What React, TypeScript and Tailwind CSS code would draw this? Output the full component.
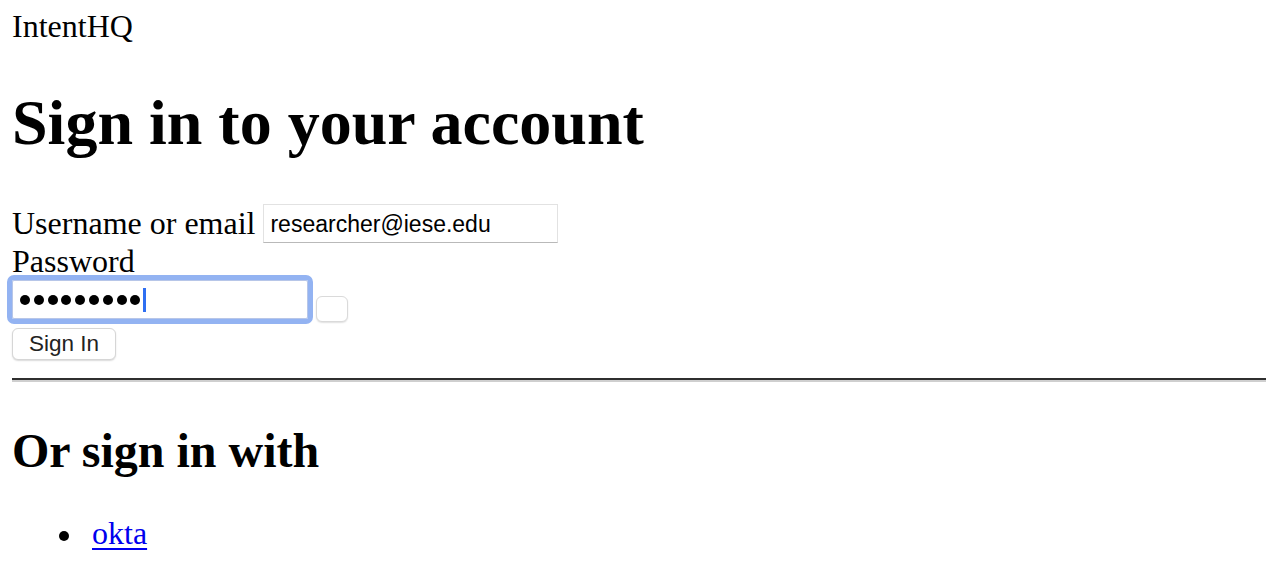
export default function App() {
  const dots = Array.from({ length: 9 });

  return (
    <div className="min-h-[566px] bg-white pt-[8px] pl-[12px] pr-[14px] text-black" style={{ fontFamily: '"Liberation Serif", "Times New Roman", serif' }}>
      <div className="text-[32px] leading-[37px]">IntentHQ</div>

      <h1 className="mt-[41px] text-[64px] font-bold leading-[74px]">Sign in to your account</h1>

      <form className="mt-[44px] flex flex-col items-start">
        {/* username */}
        <div className="flex h-[39px] items-center gap-[8px]">
          <label className="text-[32px] leading-[37px]">Username or email</label>
          <div className="flex h-[39px] w-[295px] items-center border border-[#e2e2e2] border-b-[#b9b9b9] bg-white pl-[6px] pt-[2px] text-[23px] text-black" style={{ fontFamily: '"Liberation Sans", Arial, sans-serif' }}>
            researcher@iese.edu
          </div>
        </div>

        <label className="text-[32px] leading-[37px]">Password</label>

        {/* password + toggle */}
        <div className="flex h-[42px] items-start gap-[8px]">
          <div className="flex h-[39px] w-[296px] items-center rounded-[2px] border border-[#b7c6e8] bg-white pl-[7px] outline-[5px] outline-solid outline-[#93b3f2]">
            <div className="flex items-center gap-[3.8px] pt-[1px]">
              {dots.map((_, i) => (
                <span key={i} className="block h-[10px] w-[10px] rounded-full bg-black" />
              ))}
            </div>
            <span className="ml-[3px] block h-[24px] w-[2.5px] bg-[#2f6ff2]" />
          </div>
          <button type="button" className="mt-[16px] h-[26px] w-[32px] rounded-[6px] border border-[#dadada] bg-white shadow-[0_1px_1.5px_rgba(0,0,0,0.12)]" />
        </div>

        <button type="button" className="mt-[6px] flex h-[32px] w-[104px] items-center justify-center rounded-[6px] border border-[#d6d6d6] bg-white text-[22.5px] text-[#222] shadow-[0_1px_1.5px_rgba(0,0,0,0.15)]" style={{ fontFamily: '"Liberation Sans", Arial, sans-serif' }}>
          Sign In
        </button>
      </form>

      <div className="mt-[18px] w-[1254px]">
        <div className="h-[2px] bg-[#2f2f2f]" />
        <div className="h-[2px] bg-[#cfcfcf]" />
      </div>

      <h2 className="mt-[41px] text-[48px] font-bold leading-[55px]">Or sign in with</h2>

      <ul className="mt-[37px]">
        <li className="flex items-start text-[32px] leading-[37px]">
          <span className="ml-[47px] mt-[15.5px] block h-[10px] w-[10px] rounded-full bg-black" />
          <a href="#" className="ml-[23px] text-[#0000ee] underline underline-offset-[4px] decoration-[2px]">okta</a>
        </li>
      </ul>
    </div>
  );
}
